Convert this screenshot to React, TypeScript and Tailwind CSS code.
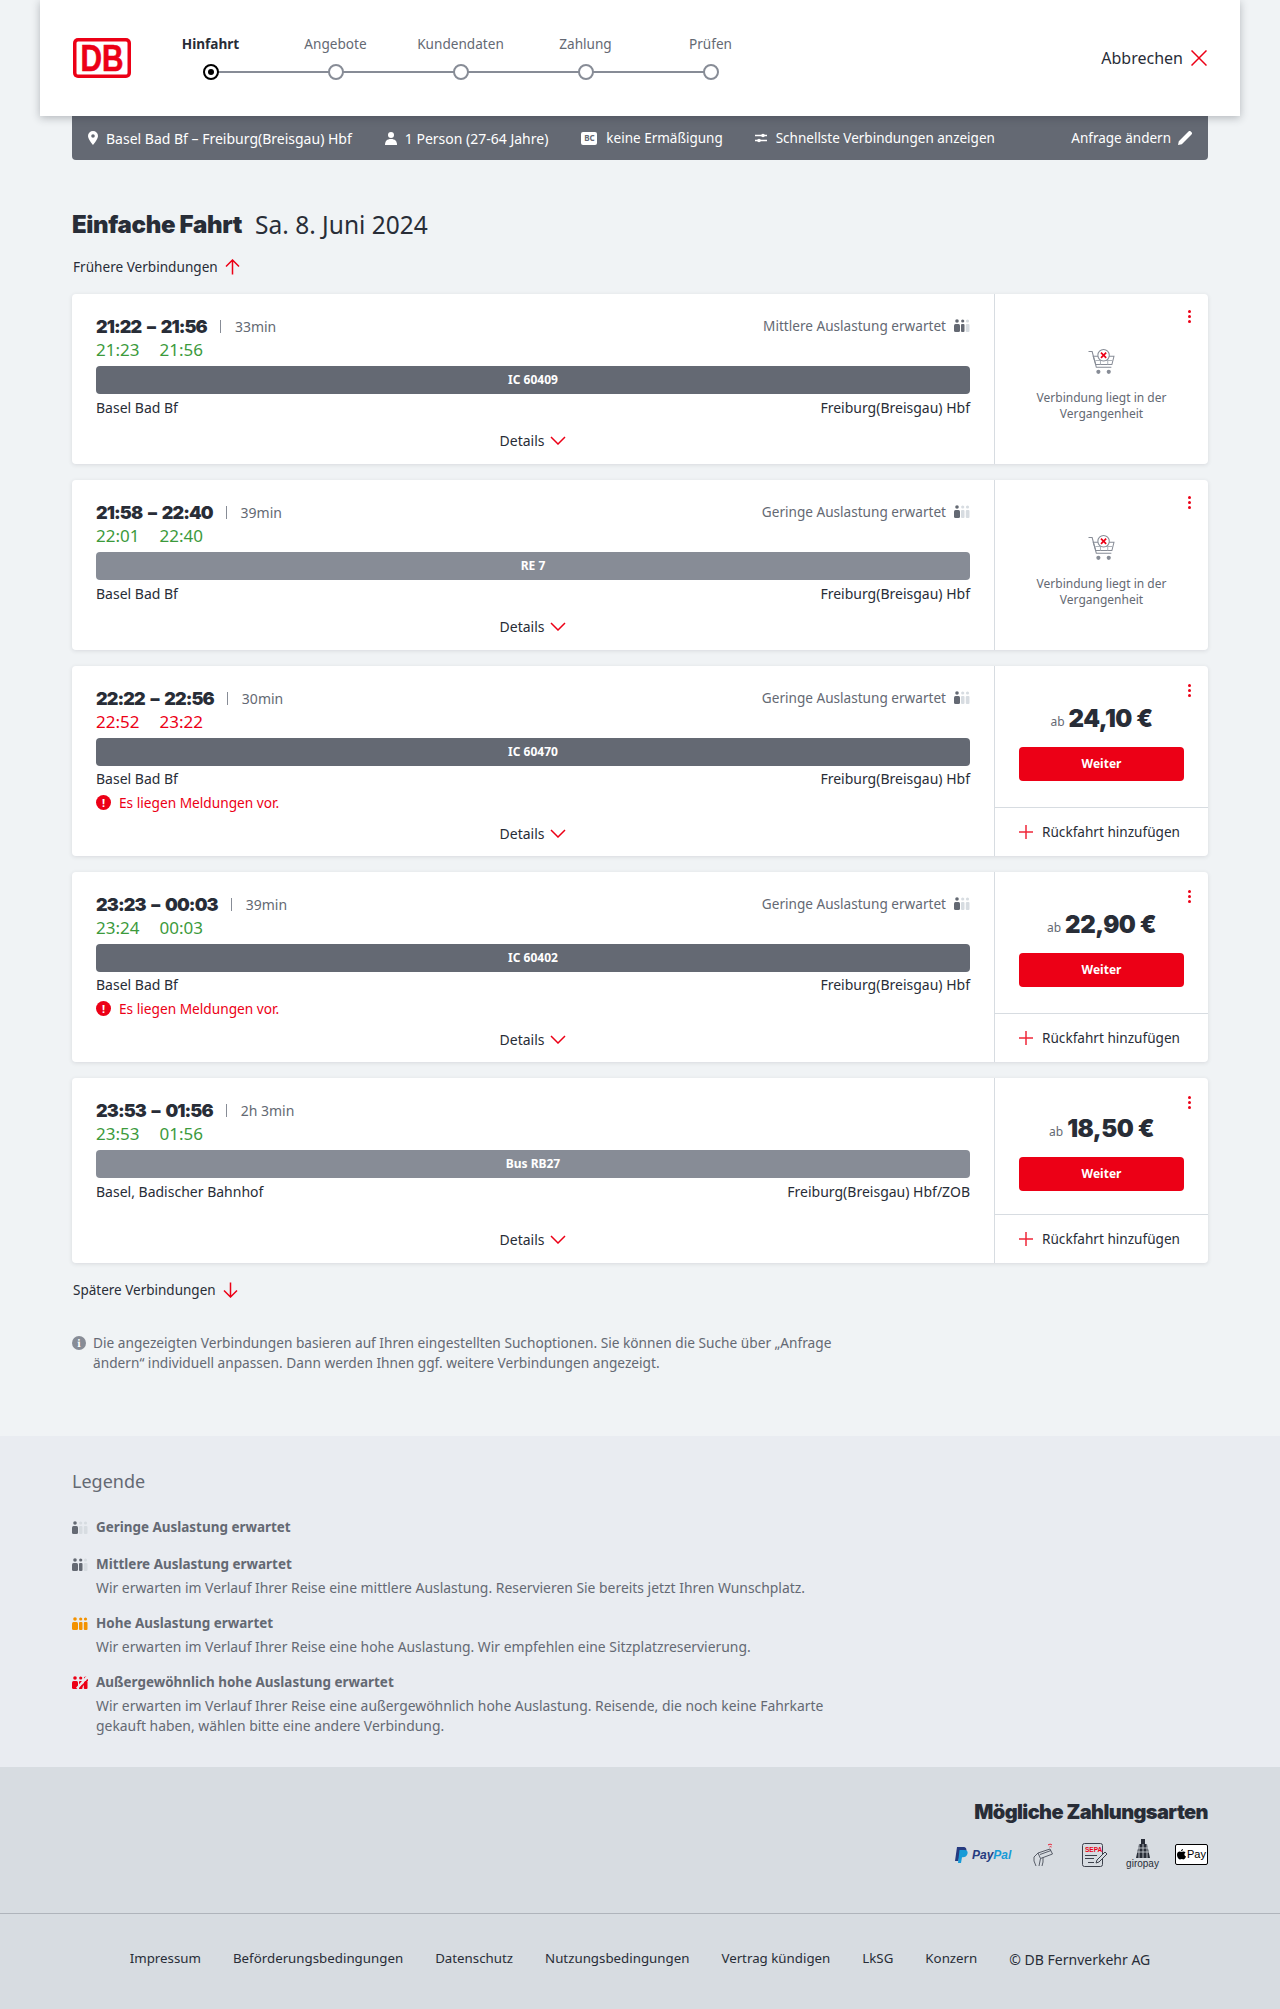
const font = '[font-family:"Noto_Sans",sans-serif]'
const heavy = '[font-family:Inter,sans-serif]'

function DbLogo() {
  return (
    <svg width="58" height="40" viewBox="0 0 58 40" aria-label="DB">
      <rect width="58" height="40" rx="5" fill="#ec0016" />
      <rect x="3.500" y="3.500" width="51" height="33" rx="1.500" fill="#fff" />
      <text
        x="29"
        y="33"
        textAnchor="middle"
        textLength="43"
        lengthAdjust="spacingAndGlyphs"
        fontFamily="Liberation Sans, sans-serif"
        fontWeight="700"
        fontSize="36"
        fill="#ec0016"
        stroke="#ec0016"
        strokeWidth="0.6"
      >
        DB
      </text>
    </svg>
  )
}

function ChevronIcon() {
  return (
    <svg width="16" height="9" viewBox="0 0 16 9" fill="none">
      <path d="M1 1l7 7 7-7" stroke="#ec0016" strokeWidth="1.500" />
    </svg>
  )
}

function ArrowIcon({ up }: { up?: boolean }) {
  return (
    <svg width="15" height="16" viewBox="0 0 15 16" fill="none" className={up ? '' : 'rotate-180'}>
      <path d="M7.500 15.500V1M1 7.500 7.500 1 14 7.500" stroke="#ec0016" strokeWidth="1.500" />
    </svg>
  )
}

function PlusIcon() {
  return (
    <svg width="14" height="14" viewBox="0 0 14 14" fill="none">
      <path d="M7 0v14M0 7h14" stroke="#ec0016" strokeWidth="1.500" opacity="0.85" />
    </svg>
  )
}

function CloseIcon() {
  return (
    <svg width="16" height="16" viewBox="0 0 16 16" fill="none">
      <path d="M.5.500l15 15M15.500.500l-15 15" stroke="#ec0016" strokeWidth="1.500" />
    </svg>
  )
}

function Occupancy({ level }: { level: 1 | 2 | 3 | 4 }) {
  const on = level === 3 ? '#f39200' : level === 4 ? '#ec0016' : '#646973'
  const off = '#d7dce1'
  const c2 = level >= 2 ? on : off
  const c3 = level >= 3 ? on : off
  return (
    <svg viewBox="0 0 16 13" className="h-[13px] w-[16px]">
      <circle cx="3" cy="2" r="1.800" fill={on} />
      <rect x="0" y="5" width="6" height="8" rx="1.500" fill={on} />
      <circle cx="8.700" cy="2" r="1.600" fill={c2} />
      <rect x="7" y="5" width="3.500" height="8" rx="1" fill={c2} />
      <circle cx="13.500" cy="2" r="1.600" fill={c3} />
      <rect x="11.800" y="5" width="3.700" height="8" rx="1" fill={c3} />
      {level === 4 ? <path d="M5 12.500 15 1" stroke="#e9ecf1" strokeWidth="2.500" /> : null}
      {level === 4 ? <path d="M7.500 13 16 3.500" stroke="#ec0016" strokeWidth="1.500" /> : null}
    </svg>
  )
}

function CartGone() {
  return (
    <svg width="27" height="27" viewBox="0 0 26 26" fill="none">
      <path d="M0.500 2.500H4L8 17.500H22.500" stroke="#878c96" strokeWidth="1" />
      <path d="M5 7H25L23 15H7.500Z" stroke="#878c96" strokeWidth="1" />
      <path d="M7 11H24M12 7V15M19 7V15" stroke="#afb4bb" strokeWidth="1" />
      <circle cx="15" cy="6" r="5.500" fill="#fff" stroke="#878c96" strokeWidth="1" />
      <path d="M12.500 3.500 17.500 8.500M17.500 3.500 12.500 8.500" stroke="#ec0016" strokeWidth="1.600" />
      <circle cx="10" cy="22" r="2" fill="#878c96" />
      <circle cx="20" cy="22" r="2" fill="#878c96" />
    </svg>
  )
}

function Kebab({ top }: { top: string }) {
  return (
    <div className={`absolute right-[17px] flex flex-col gap-[2px] ${top}`}>
      <span className="h-[3px] w-[3px] rounded-full bg-[#ec0016]" />
      <span className="h-[3px] w-[3px] rounded-full bg-[#ec0016]" />
      <span className="h-[3px] w-[3px] rounded-full bg-[#ec0016]" />
    </div>
  )
}

type Connection = {
  time: string
  duration: string
  realStart: string
  realEnd: string
  late?: boolean
  load?: string
  loadLevel?: 1 | 2
  train: string
  dark?: boolean
  from: string
  to: string
  notice?: boolean
  price?: string
  height: string
}

const connections: Connection[] = [
  { time: '21:22 – 21:56', duration: '33min', realStart: '21:23', realEnd: '21:56', load: 'Mittlere Auslastung erwartet', loadLevel: 2, train: 'IC 60409', dark: true, from: 'Basel Bad Bf', to: 'Freiburg(Breisgau) Hbf', height: 'h-[170px]' },
  { time: '21:58 – 22:40', duration: '39min', realStart: '22:01', realEnd: '22:40', load: 'Geringe Auslastung erwartet', loadLevel: 1, train: 'RE 7', from: 'Basel Bad Bf', to: 'Freiburg(Breisgau) Hbf', height: 'h-[170px]' },
  { time: '22:22 – 22:56', duration: '30min', realStart: '22:52', realEnd: '23:22', late: true, load: 'Geringe Auslastung erwartet', loadLevel: 1, train: 'IC 60470', dark: true, from: 'Basel Bad Bf', to: 'Freiburg(Breisgau) Hbf', notice: true, price: '24,10 €', height: 'h-[190px]' },
  { time: '23:23 – 00:03', duration: '39min', realStart: '23:24', realEnd: '00:03', load: 'Geringe Auslastung erwartet', loadLevel: 1, train: 'IC 60402', dark: true, from: 'Basel Bad Bf', to: 'Freiburg(Breisgau) Hbf', notice: true, price: '22,90 €', height: 'h-[190px]' },
  { time: '23:53 – 01:56', duration: '2h 3min', realStart: '23:53', realEnd: '01:56', train: 'Bus RB27', from: 'Basel, Badischer Bahnhof', to: 'Freiburg(Breisgau) Hbf/ZOB', price: '18,50 €', height: 'h-[185px]' },
]

function ConnectionCard({ c }: { c: Connection }) {
  return (
    <div className={`flex rounded-[4px] bg-white shadow-[0_1px_4px_rgba(40,45,55,0.12)] ${c.height}`}>
      <div className="flex min-w-0 flex-1 flex-col pl-[24px] pr-[24px] pt-[20px]">
        <div className="flex h-[24px] items-center">
          <span className={`${heavy} text-[18px] font-black tracking-[-0.9px] text-[#282d37] [word-spacing:3px]`}>{c.time}</span>
          <span className="ml-[13px] h-[13px] w-px bg-[#878c96]" />
          <span className="ml-[14px] text-[14px] text-[#646973]">{c.duration}</span>
          {c.load ? (
            <span className="ml-auto flex items-center gap-[8px] text-[13.6px] text-[#646973]">
              {c.load}
              <Occupancy level={c.loadLevel ?? 1} />
            </span>
          ) : null}
        </div>
        <div className={`flex h-[24px] items-center gap-[20px] text-[17px] ${c.late ? 'text-[#ec0016]' : 'text-[#3c9a3c]'}`}>
          <span>{c.realStart}</span>
          <span>{c.realEnd}</span>
        </div>
        <div className={`mt-[4px] flex h-[28px] shrink-0 items-center justify-center rounded-[4px] text-[12px] font-bold text-white ${c.dark ? 'bg-[#646973]' : 'bg-[#878c96]'}`}>
          {c.train}
        </div>
        <div className="mt-[1px] flex h-[24px] items-center justify-between text-[14px] text-[#282d37]">
          <span>{c.from}</span>
          <span>{c.to}</span>
        </div>
        {c.notice ? (
          <div className="mt-[2px] flex h-[24px] items-center gap-[8px] text-[13.7px] text-[#ec0016]">
            <span className="flex h-[15px] w-[15px] items-center justify-center rounded-full bg-[#ec0016] text-[11px] font-bold leading-none text-white">!</span>
            Es liegen Meldungen vor.
          </div>
        ) : null}
        <div className="mb-[4px] mt-auto flex h-[40px] items-center justify-center gap-[6px] text-[14px] text-[#282d37]">
          Details
          <ChevronIcon />
        </div>
      </div>
      <div className="relative flex w-[214px] shrink-0 flex-col border-l border-[#d7dce1]">
        <Kebab top={c.price ? 'top-[18px]' : 'top-[16px]'} />
        {c.price ? (
          <>
            <div className="flex flex-1 flex-col items-center justify-center px-[24px] pt-[12px]">
              <div className="flex h-[30px] items-center gap-[4px]">
                <span className="mt-[6px] text-[12px] text-[#646973]">ab</span>
                <span className={`${heavy} text-[24px] font-black tracking-[-0.5px] text-[#282d37]`}>{c.price}</span>
              </div>
              <button type="button" className="mt-[13px] h-[34px] w-full rounded-[4px] bg-[#ec0016] text-[12px] font-bold text-white">
                Weiter
              </button>
            </div>
            <div className="flex h-[49px] shrink-0 items-center gap-[9px] border-t border-[#d7dce1] pl-[24px] text-[13.6px] text-[#282d37]">
              <PlusIcon />
              Rückfahrt hinzufügen
            </div>
          </>
        ) : (
          <div className="flex flex-1 flex-col items-center justify-center px-[24px] pt-[12px] text-center text-[12px] leading-[16px] text-[#646973]">
            <CartGone />
            <div className="mt-[14px]">Verbindung liegt in der Vergangenheit</div>
          </div>
        )}
      </div>
    </div>
  )
}

const steps = ['Hinfahrt', 'Angebote', 'Kundendaten', 'Zahlung', 'Prüfen']

function Header() {
  return (
    <header className="relative z-10 mx-[40px] flex h-[116px] items-center bg-white pl-[33px] pr-[33px] shadow-[0_2px_8px_rgba(40,45,55,0.3)]">
      <DbLogo />
      <div className="relative ml-[17px] -mt-[2px] flex">
        <div className="absolute left-[62px] top-[37px] h-[2px] w-[500px] bg-[#878c96]" />
        {steps.map((step, i) => (
          <div key={step} className="relative flex w-[125px] flex-col items-center">
            <span className={`h-[20px] text-[13.6px] leading-[20px] ${i === 0 ? 'font-bold text-[#282d37]' : 'text-[#646973]'}`}>{step}</span>
            <span className={`mt-[10px] flex h-[16px] w-[16px] items-center justify-center rounded-full border-2 bg-white ${i === 0 ? 'border-black' : 'border-[#878c96]'}`}>
              {i === 0 ? <span className="h-[6px] w-[6px] rounded-full bg-black" /> : null}
            </span>
          </div>
        ))}
      </div>
      <div className="ml-auto flex items-center gap-[8px] text-[16px] text-[#282d37]">
        Abbrechen
        <CloseIcon />
      </div>
    </header>
  )
}

function SummaryBar() {
  return (
    <div className="mx-[72px] flex h-[44px] items-center rounded-b-[4px] bg-[#646973] px-[16px] text-[14px] text-white">
      <svg width="10" height="14" viewBox="0 0 10 14" className="mr-[8px]">
        <path fillRule="evenodd" d="M5 0a5 5 0 0 1 5 5c0 3.200-5 9-5 9S0 8.200 0 5a5 5 0 0 1 5-5Zm0 3.200a1.800 1.800 0 1 0 0 3.600 1.800 1.800 0 0 0 0-3.600Z" fill="#fff" />
      </svg>
      <span>Basel Bad Bf – Freiburg(Breisgau) Hbf</span>
      <svg width="12" height="13" viewBox="0 0 12 13" className="ml-[33px] mr-[8px]">
        <circle cx="6" cy="3" r="3" fill="#fff" />
        <path d="M0 13c0-4 2-6 6-6s6 2 6 6Z" fill="#fff" />
      </svg>
      <span>1 Person (27-64 Jahre)</span>
      <span className="ml-[33px] mr-[9px] flex h-[13px] w-[16px] items-center justify-center rounded-[2px] bg-white text-[8px] font-bold text-[#646973]">BC</span>
      <span className="text-[13.5px]">keine Ermäßigung</span>
      <svg width="12" height="10" viewBox="0 0 12 10" className="ml-[32px] mr-[9px]">
        <path d="M0 2.500h12M0 7.500h12" stroke="#fff" strokeWidth="1.400" />
        <circle cx="8" cy="2.500" r="1.800" fill="#fff" />
        <circle cx="4" cy="7.500" r="1.800" fill="#fff" />
      </svg>
      <span className="text-[13.5px]">Schnellste Verbindungen anzeigen</span>
      <span className="ml-auto text-[13.5px]">Anfrage ändern</span>
      <svg width="14" height="14" viewBox="0 0 14 14" className="ml-[7px]">
        <path d="M0 14l.8-3.800L10.500.5a1.600 1.600 0 0 1 2.300 0l.7.7a1.600 1.600 0 0 1 0 2.300L3.800 13.200Z" fill="#fff" />
      </svg>
    </div>
  )
}

const legend: { level: 1 | 2 | 3 | 4; title: string; text?: string }[] = [
  { level: 1, title: 'Geringe Auslastung erwartet' },
  { level: 2, title: 'Mittlere Auslastung erwartet', text: 'Wir erwarten im Verlauf Ihrer Reise eine mittlere Auslastung. Reservieren Sie bereits jetzt Ihren Wunschplatz.' },
  { level: 3, title: 'Hohe Auslastung erwartet', text: 'Wir erwarten im Verlauf Ihrer Reise eine hohe Auslastung. Wir empfehlen eine Sitzplatzreservierung.' },
  { level: 4, title: 'Außergewöhnlich hohe Auslastung erwartet', text: 'Wir erwarten im Verlauf Ihrer Reise eine außergewöhnlich hohe Auslastung. Reisende, die noch keine Fahrkarte gekauft haben, wählen bitte eine andere Verbindung.' },
]

function Legend() {
  return (
    <section className="h-[331px] bg-[#e9ecf1] px-[72px] pt-[33px]">
      <h2 className="text-[18px] leading-[24px] text-[#646973]">Legende</h2>
      <div className="mt-[22px] flex flex-col gap-[13px]">
        {legend.map((item) => (
          <div key={item.title} className="grid grid-cols-[24px_1fr] leading-[24px] text-[#646973]">
            <div className="flex h-[24px] items-center">
              <Occupancy level={item.level} />
            </div>
            <div className="text-[13.45px] font-bold">{item.title}</div>
            {item.text ? <div className="col-start-2 max-w-[740px] pt-[2px] text-[13.9px] leading-[20px]">{item.text}</div> : null}
          </div>
        ))}
      </div>
    </section>
  )
}

function PaymentIcons() {
  return (
    <div className="mt-[14px] flex items-center justify-end">
      <svg width="58" height="18" viewBox="0 0 58 18">
        <path d="M2 1h6c3 0 4 2 3.200 4.500C10.500 8 8.500 9 6 9H4.500L3.500 15H0Z" fill="#253b80" />
        <path d="M4.500 4h5c2.500 0 3.500 1.500 3 3.800-.6 2.500-2.500 3.400-4.500 3.400H7L6 17H3Z" fill="#179bd7" />
        <text x="17" y="13" fontFamily="Liberation Sans, sans-serif" fontWeight="700" fontStyle="italic" fontSize="12" fill="#253b80">Pay<tspan fill="#179bd7">Pal</tspan></text>
      </svg>
      <svg width="22" height="25" viewBox="0 0 22 25" fill="none" className="ml-[20px]" stroke="#4a4f5a" strokeWidth="0.900">
        <path d="M5 11l12-4 2.500 5-12 4.500Z" />
        <path d="M7 12.500l11-4" />
        <path d="M5 11 1 15v4l2 5M7.500 16.500 7 19l-1 5M10 15.500V20l-1 4" />
        <path d="M15 3c1.500-1 3-1 4 0M16.500 5c.8-.5 1.500-.5 2 0" stroke="#ec0016" />
      </svg>
      <svg width="26" height="24" viewBox="0 0 26 24" fill="none" className="ml-[27px]">
        <rect x="0.500" y="0.500" width="20" height="23" rx="2" stroke="#3c414b" />
        <text x="3" y="9" fontFamily="Liberation Sans, sans-serif" fontWeight="700" fontSize="6.500" fill="#ec0016">SEPA</text>
        <path d="M3 12.500h12M3 15.500h9M6 19.500h6" stroke="#3c414b" />
        <path d="M14 20l1-3 8-8 2 2-8 8Z" fill="#d7dce1" stroke="#3c414b" />
      </svg>
      <div className="ml-[18px] flex w-[33px] flex-col items-center">
        <svg width="14" height="19" viewBox="0 0 14 19">
          <path d="M5 0h4v5h2l3 14H0L3 5h2Z" fill="#282d37" />
          <path d="M0 9h14M0 13h14M3 5v14M7 5v14M11 5v14" stroke="#d7dce1" strokeWidth="0.800" />
        </svg>
        <span className="text-[10px] leading-[12px] text-[#282d37] [font-family:Liberation_Sans,sans-serif]">giropay</span>
      </div>
      <div className="ml-[16px] flex h-[21px] w-[33px] items-center justify-center gap-[1px] rounded-[2px] border border-black bg-white text-[11px] leading-none text-black [font-family:Liberation_Sans,sans-serif]">
        <svg width="9" height="11" viewBox="0 0 9 11">
          <path d="M6 0c.1 1.200-.9 2.400-2 2.300C3.900 1.200 5 .1 6 0ZM4.400 3c.6 0 1.200-.5 2.100-.5.700 0 1.500.4 2 1.100-1.700 1-1.400 3.300.5 4-.5 1.200-1.400 2.900-2.500 2.900-.7 0-1-.4-1.800-.4s-1.200.4-1.800.4C1.700 10.500 0 8 0 5.800 0 3.700 1.400 2.600 2.600 2.600c.8 0 1.300.4 1.800.4Z" fill="#000" />
        </svg>
        Pay
      </div>
    </div>
  )
}

const footerLinks = ['Impressum', 'Beförderungsbedingungen', 'Datenschutz', 'Nutzungsbedingungen', 'Vertrag kündigen', 'LkSG', 'Konzern']

function Notes() {
  return (
    <>
      <div className="mt-[15px] flex h-[24px] items-center gap-[7px] pl-px text-[13.5px] text-[#282d37]">
        Spätere Verbindungen
        <ArrowIcon />
      </div>
      <div className="mt-[31px] flex max-w-[760px] gap-[7px] text-[13.7px] leading-[20px] text-[#646973]">
        <span className="mt-[3px] flex h-[14px] w-[14px] shrink-0 items-center justify-center rounded-full bg-[#878c96] font-serif text-[11px] font-bold leading-none text-white">i</span>
        <p>Die angezeigten Verbindungen basieren auf Ihren eingestellten Suchoptionen. Sie können die Suche über „Anfrage ändern“ individuell anpassen. Dann werden Ihnen ggf. weitere Verbindungen angezeigt.</p>
      </div>
    </>
  )
}

export default function App() {
  return (
    <div className={`${font} min-h-[2009px] bg-[#f0f3f5]`}>
      <Header />
      <SummaryBar />
      <main className="h-[1276px] px-[72px] pt-[47px]">
        <div className="flex h-[34px] items-center gap-[13px] pt-[2px]">
          <h1 className={`${heavy} text-[24px] font-black tracking-[-0.35px] text-[#282d37]`}>Einfache Fahrt</h1>
          <span className="text-[24.5px] text-[#282d37]">Sa. 8. Juni 2024</span>
        </div>
        <div className="mt-[14px] flex h-[24px] items-center gap-[7px] pl-px text-[13.6px] text-[#282d37]">
          Frühere Verbindungen
          <ArrowIcon up />
        </div>
        <div className="mt-[15px] flex flex-col gap-[16px]">
          {connections.map((c) => (
            <ConnectionCard key={c.time} c={c} />
          ))}
        </div>
        <Notes />
      </main>
      <Legend />
      <section className="h-[146px] bg-[#d7dce1] px-[72px] pt-[32px]">
        <h2 className={`${heavy} text-right text-[20px] font-black leading-[26px] tracking-[-0.6px] text-[#282d37]`}>Mögliche Zahlungsarten</h2>
        <PaymentIcons />
      </section>
      <footer className="flex h-[96px] items-center justify-center gap-[32px] border-t border-[#afb4bb] bg-[#d7dce1] pb-[5px] text-[13.3px] text-[#282d37]">
        {footerLinks.map((link) => (
          <span key={link}>{link}</span>
        ))}
        <span className="text-[14px]">© DB Fernverkehr AG</span>
      </footer>
    </div>
  )
}
